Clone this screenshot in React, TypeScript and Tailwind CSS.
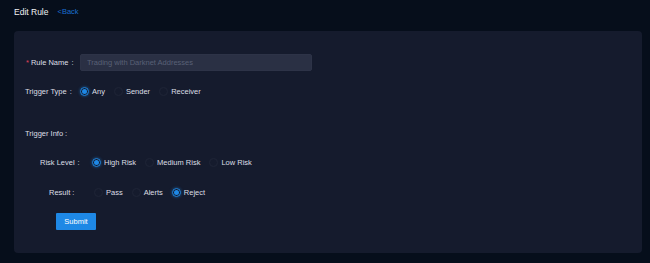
import React from 'react';

type Opt = { label: string; checked?: boolean };

function Radio({ checked }: { checked?: boolean }) {
  return (
    <span
      className={`flex h-[9px] w-[9px] shrink-0 items-center justify-center rounded-full border ${
        checked ? 'border-[#1e88e5] shadow-[0_0_3px_rgba(30,136,229,0.6)]' : 'border-[#1f2537]'
      }`}
    >
      {checked && <span className="h-[5px] w-[5px] rounded-full bg-[#1e88e5]" />}
    </span>
  );
}

function RadioGroup({ options }: { options: Opt[] }) {
  return (
    <div className="flex items-center gap-[9px]">
      {options.map((o) => (
        <label key={o.label} className="flex items-center gap-[3px] whitespace-nowrap">
          <Radio checked={o.checked} />
          <span>{o.label}</span>
        </label>
      ))}
    </div>
  );
}

export default function App() {
  return (
    <div
      className="flex h-[263px] w-[650px] flex-col bg-[#060e1b] px-[14px] text-[7.5px] text-[#dcdfe5]"
      style={{ fontFamily: '"Liberation Sans", Arial, sans-serif' }}
    >
      {/* Header */}
      <div className="flex h-[24px] items-center gap-[9px]">
        <span className="text-[8.5px] text-[#f0f1f4]">Edit Rule</span>
        <span className="text-[7.5px] text-[#1a6fd0]">&lt;Back</span>
      </div>

      {/* Card */}
      <div className="mt-[7px] flex h-[222px] w-[628px] flex-col rounded-[4px] bg-[#151b2d] pt-[23px]">
        {/* Rule name */}
        <div className="flex h-[17px] items-center pl-[12px]">
          <div className="flex w-[54px] shrink-0 items-center whitespace-nowrap">
            <span className="mr-[2px] text-[#e0425a]">*</span>
            <span>Rule Name</span>
            <span className="ml-[3px]">:</span>
          </div>
          <input
            readOnly
            placeholder="Trading with Darknet Addresses"
            className="h-[17px] w-[232px] rounded-[2px] border border-[#2d3347] bg-[#2a3044] px-[6px] text-[7.5px] text-[#dcdfe5] outline-none placeholder:text-[#596076]"
          />
        </div>

        {/* Trigger type */}
        <div className="mt-[12px] flex h-[17px] items-center pl-[11px]">
          <div className="w-[55px] shrink-0 whitespace-nowrap">
            Trigger Type<span className="ml-[3px]">:</span>
          </div>
          <RadioGroup
            options={[{ label: 'Any', checked: true }, { label: 'Sender' }, { label: 'Receiver' }]}
          />
        </div>

        {/* Trigger info */}
        <div className="mt-[25px] flex h-[17px] items-center pl-[11px] whitespace-nowrap">
          Trigger Info<span className="ml-[2px]">:</span>
        </div>

        {/* Risk level */}
        <div className="mt-[12px] flex h-[17px] items-center pl-[26px]">
          <div className="w-[52px] shrink-0 whitespace-nowrap">
            Risk Level<span className="ml-[3px]">:</span>
          </div>
          <RadioGroup
            options={[{ label: 'High Risk', checked: true }, { label: 'Medium Risk' }, { label: 'Low Risk' }]}
          />
        </div>

        {/* Result */}
        <div className="mt-[13px] flex h-[17px] items-center pl-[35px]">
          <div className="w-[45px] shrink-0 whitespace-nowrap">
            Result<span className="ml-[2px]">:</span>
          </div>
          <RadioGroup options={[{ label: 'Pass' }, { label: 'Alerts' }, { label: 'Reject', checked: true }]} />
        </div>

        <div className="mt-[12px] pl-[42px]">
          <button className="flex h-[17px] w-[40px] items-center justify-center rounded-[1px] bg-[#1e88e5] text-[7.5px] text-white">
            Submit
          </button>
        </div>
      </div>
    </div>
  );
}
